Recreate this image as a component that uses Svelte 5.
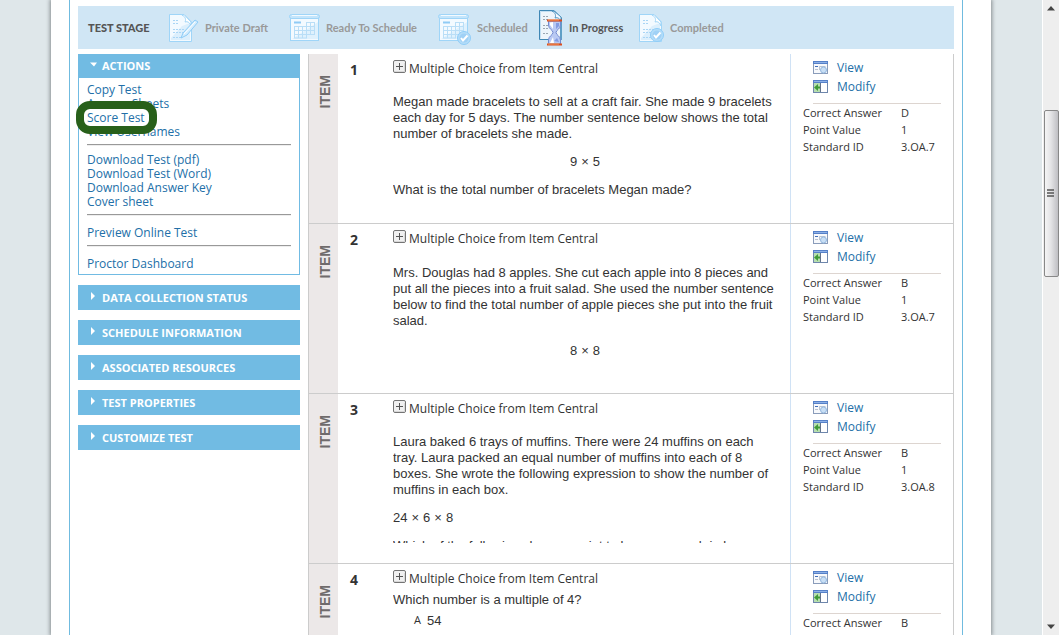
<script>
  const stages = [
    { label: 'Private Draft', icon: 'draft' },
    { label: 'Ready To Schedule', icon: 'calendar' },
    { label: 'Scheduled', icon: 'calendarCheck' },
    { label: 'In Progress', icon: 'progress', active: true },
    { label: 'Completed', icon: 'complete' }
  ];

  const groups = [
    ['Copy Test', 'Answer Sheets', 'Score Test', 'View Usernames'],
    ['Download Test (pdf)', 'Download Test (Word)', 'Download Answer Key', 'Cover sheet'],
    ['Preview Online Test'],
    ['Proctor Dashboard']
  ];

  const panels = [
    'DATA COLLECTION STATUS',
    'SCHEDULE INFORMATION',
    'ASSOCIATED RESOURCES',
    'TEST PROPERTIES',
    'CUSTOMIZE TEST'
  ];

  const items = [
    {
      answer: 'D',
      standard: '3.OA.7',
      blocks: [
        { text: 'Megan made bracelets to sell at a craft fair. She made 9 bracelets each day for 5 days. The number sentence below shows the total number of bracelets she made.' },
        { factors: [9, 5], centered: true },
        { text: 'What is the total number of bracelets Megan made?' }
      ]
    },
    {
      answer: 'B',
      standard: '3.OA.7',
      spacious: true,
      blocks: [
        { text: 'Mrs. Douglas had 8 apples. She cut each apple into 8 pieces and put all the pieces into a fruit salad. She used the number sentence below to find the total number of apple pieces she put into the fruit salad.' },
        { factors: [8, 8], centered: true }
      ]
    },
    {
      answer: 'B',
      standard: '3.OA.8',
      blocks: [
        { text: 'Laura baked 6 trays of muffins. There were 24 muffins on each tray. Laura packed an equal number of muffins into each of 8 boxes. She wrote the following expression to show the number of muffins in each box.' },
        { factors: [24, 6, 8] },
        { text: 'Which of the following shows a point to be a sum each in b' }
      ]
    },
    {
      answer: 'B',
      standard: '3.OA.9',
      compact: true,
      blocks: [{ text: 'Which number is a multiple of 4?' }],
      choice: { letter: 'A', value: '54' }
    }
  ];
</script>

{#snippet paper()}
  <path d="M1.5 1.5H16L23.5 9V28.5H1.5Z" fill="#f3faff" stroke="#9fd5f8" />
  <path d="M3 25L14 13L22 10V27H3Z" fill="#dceffc" />
  <path d="M13 2C19 3 22 7 23 13L23.5 9L16 1.5Z" fill="#c0e2f9" />
  <path d="M14 2C18 4 18 7 17 9C20 8 22 10 23 13V9L16 1.5Z" fill="#fff" stroke="#9fd5f8" />
  <path d="M5 7.5H10M5 10.5H11M5 16.5H17M5 19.5H15M5 24.5H13" stroke="#a9d5f5" stroke-dasharray="2 1" />
{/snippet}

{#snippet calendar()}
  <rect x="1.5" y="5.5" width="28" height="22" fill="#f3faff" stroke="#9fd5f8" />
  <path d="M3 26L29 9V26Z" fill="#dff1fd" />
  <rect x=".5" y="1.5" width="30" height="4" rx="2" fill="#c4e5fb" stroke="#9fd5f8" />
  <path d="M3 2.5H28" stroke="#f3faff" />
  <path d="M5 9.5H12" stroke="#8fcbf5" stroke-width="2" />
  <path d="M17 9.5H26M5 13.5H26M5 17.5H26M5 21.5H26M5 25H18M5.5 13V25M9.5 13V25M13.5 13V25M17.5 9V25M21.5 9V22M25.5 9V22" stroke="#b9def7" fill="none" />
{/snippet}

{#snippet tick(cx, cy)}
  <circle {cx} {cy} r="6.5" fill="#b5ddf9" stroke="#8fcdf8" />
  <circle {cx} {cy} r="4.5" fill="#a0d1f6" />
  <path d="M{cx - 3} {cy}L{cx - 1} {cy + 2.5}L{cx + 3.5} {cy - 2.5}" fill="none" stroke="#fff" stroke-width="2" />
{/snippet}

{#snippet stageIcon(name)}
  {#if name === 'draft'}
    <svg width="30" height="36" viewBox="0 0 30 36" aria-hidden="true">
      <g transform="translate(-1 3)">
        {@render paper()}
        <path d="M13 25L15 20L27 7L30 9L19 22Z" fill="#d5edfd" stroke="#8dccf7" />
        <path d="M16 21L27 9" stroke="#fff" />
      </g>
    </svg>
  {:else if name === 'calendar'}
    <svg width="31" height="36" viewBox="0 0 31 36" aria-hidden="true">
      <g transform="translate(0 3)">{@render calendar()}</g>
    </svg>
  {:else if name === 'calendarCheck'}
    <svg width="33" height="36" viewBox="0 0 33 36" aria-hidden="true">
      <g transform="translate(0 3)">{@render calendar()}{@render tick(26, 25)}</g>
    </svg>
  {:else if name === 'progress'}
    <svg width="24" height="36" viewBox="0 0 24 36" aria-hidden="true">
      <path d="M.5 .5H15L22.5 8V29.5H.5Z" fill="#eef5fb" stroke="#3f87b5" />
      <path d="M1.5 28.5V1.5H13" fill="none" stroke="#c3dff2" />
      <path d="M12 1C18 2 21 6 22 12V8L15 .5Z" fill="#5f9fc6" />
      <path d="M13 1C17 3 17 6 16 8C19 7 21 9 22 11V7L15 1Z" fill="#f5faff" stroke="#4f94c0" />
      <path d="M22 10V29" stroke="#5f9fc6" stroke-width="2" />
      <path d="M4 6.5H9M4 9.5H10M4 15.5H9M4 18.5H10M4 23.5H9" stroke="#9aa7b2" stroke-dasharray="2 1" />
      <path d="M9.5 11H21.5V15C21.5 19 17 20 17 22.5C17 25 21.5 26 21.5 30V34H9.5V30C9.5 26 14 25 14 22.5C14 20 9.5 19 9.5 15Z" fill="#b9c9f3" stroke="#7188cf" />
      <path d="M11 12.5V15L14 19V12ZM11 33L14 27L15 33Z" fill="#fff" />
      <path d="M17 13H20V16L17 19ZM15 31L18 28L20 32Z" fill="#839be2" />
      <path d="M8 10.5H23M8 34.5H23" stroke="#dc4d1d" stroke-width="2" />
      <path d="M9 10H20M9 34H20" stroke="#f59a5f" />
    </svg>
  {:else}
    <svg width="25" height="36" viewBox="0 0 25 36" aria-hidden="true">
      <g transform="translate(-1 3)">{@render paper()}{@render tick(19, 22)}</g>
    </svg>
  {/if}
{/snippet}

<div class="window">
  <div class="backdrop">
    <div class="sheet">
      <div class="content">
        <div class="stagebar">
          <strong>TEST STAGE</strong>
          {#each stages as stage}
            <div class="stage" class:active={stage.active}>
              {@render stageIcon(stage.icon)}
              <span>{stage.label}</span>
            </div>
          {/each}
        </div>

        <div class="columns">
          <nav class="sidebar">
            <section class="actions">
              <button class="panel open"><i class="down"></i>ACTIONS</button>
              <div class="links">
                {#each groups as group, g}
                  {#if g > 0}<hr />{/if}
                  <ul class:single={group.length === 1}>
                    {#each group as link}
                      <li><a href="#top" class:ringed={link === 'Score Test'}>{link}</a></li>
                    {/each}
                  </ul>
                {/each}
              </div>
            </section>
            {#each panels as title}
              <button class="panel"><i class="right"></i>{title}</button>
            {/each}
          </nav>

          <main class="items">
            {#each items as item, n}
              <article>
                <div class="strip"><span>ITEM</span></div>
                <div class="number">{n + 1}</div>
                <div class="question">
                  <div class="kind">
                    <button class="expand" aria-label="Expand">
                      <svg width="13" height="13" viewBox="0 0 13 13" aria-hidden="true">
                        <rect x=".5" y=".5" width="12" height="12" rx="1.5" fill="#f0f0f0" stroke="#747474" />
                        <path d="M2 11.5H11.5V3" fill="none" stroke="#d8d8d8" />
                        <path d="M3 6.5H10M6.5 3V10" stroke="#555" />
                      </svg>
                    </button>
                    <span>Multiple Choice from Item Central</span>
                  </div>
                  <div class="stem" class:compact={item.compact} class:spacious={item.spacious}>
                    {#each item.blocks as block}
                      {#if block.text}
                        <p>{block.text}</p>
                      {:else}
                        <p class:centered={block.centered}>
                          {#each block.factors as f, i}{#if i > 0}<span class="times">×</span>{/if}{f}{/each}
                        </p>
                      {/if}
                    {/each}
                    {#if item.choice}
                      <div class="choice"><small>{item.choice.letter}</small><span>{item.choice.value}</span></div>
                    {/if}
                  </div>
                </div>
                <div class="details">
                  <a class="tool" href="#view">
                    <svg width="15" height="13" viewBox="0 0 15 13" aria-hidden="true">
                      <rect x=".5" y=".5" width="14" height="12" fill="#f7f9fc" stroke="#8a9cba" />
                      <path d="M0 1.5H15" stroke="#5580c8" stroke-width="3" />
                      <path d="M1 1.5H14" stroke="#8db0e6" />
                      <path d="M2 5.5H5" stroke="#446fb5" />
                      <path d="M6.5 5.5H12.5M6.5 5.5V9M2 8.5H5" stroke="#b9c3d2" fill="none" />
                      <circle cx="10.5" cy="9" r="3" fill="#c9dff5" stroke="#94b8df" />
                    </svg>
                    View
                  </a>
                  <a class="tool" href="#modify">
                    <svg width="15" height="13" viewBox="0 0 15 13" aria-hidden="true">
                      <rect x=".5" y=".5" width="14" height="12" fill="#fff" stroke="#6e86ab" />
                      <path d="M0 1.5H15" stroke="#5580c8" stroke-width="3" />
                      <path d="M1 1.5H14" stroke="#8db0e6" />
                      <path d="M1 3H7V12H1Z" fill="#b7deb0" />
                      <path d="M7.5 3V12" stroke="#62738c" />
                      <path d="M1 7.5L5 4V6.5H7V8.5H5V11Z" fill="#3f9b38" />
                    </svg>
                    Modify
                  </a>
                  <dl>
                    <dt>Correct Answer</dt><dd>{item.answer}</dd>
                    <dt>Point Value</dt><dd>1</dd>
                    <dt>Standard ID</dt><dd>{item.standard}</dd>
                  </dl>
                </div>
              </article>
            {/each}
          </main>
        </div>
      </div>
    </div>
  </div>

  <div class="scrollbar" aria-hidden="true">
    <svg class="up" width="8" height="5" viewBox="0 0 8 5"><path d="M0 4.5L4 0L8 4.5Z" fill="#444" /></svg>
    <div class="thumb">
      <svg width="8" height="9" viewBox="0 0 8 9"><path d="M0 1H7M0 4H7M0 7H7" stroke="#555" stroke-width="1.5" /></svg>
    </div>
    <svg class="bottom" width="8" height="5" viewBox="0 0 8 5"><path d="M0 .5L4 5L8 .5Z" fill="#444" /></svg>
  </div>
</div>

<style>
  .window {
    display: grid;
    grid-template-columns: 1fr 17px;
    height: 100vh;
    overflow: hidden;
    font: 12px/14px "Open Sans", sans-serif;
    color: #333;
  }
  .backdrop {
    display: flex;
    padding: 0 51px;
    background: #dfe7ea;
    overflow: hidden;
  }
  .sheet {
    flex: 1;
    padding: 0 28px 0 18px;
    background: #fff;
    box-shadow: 0 0 4px 1px #858b8e;
  }
  .content {
    padding: 6px 8px 0;
    border: solid #70bbdf;
    border-width: 0 1px;
  }
  button {
    border: 0;
    padding: 0;
    font: inherit;
  }
  a {
    color: #226fa8;
    text-decoration: none;
  }

  .stagebar {
    display: grid;
    grid-template-columns: 81px 120px 149px 101px 100px auto;
    align-items: center;
    height: 43px;
    padding-left: 10px;
    background: #d0e6f5;
    font: 700 11px/14px Lato, sans-serif;
    color: #999;
  }
  .stagebar strong,
  .stage.active {
    color: #555;
  }
  .stage {
    display: flex;
    align-items: center;
    gap: 6px;
    white-space: nowrap;
  }
  .stage svg {
    flex: none;
  }

  .columns {
    display: grid;
    grid-template-columns: 222px 1fr;
    gap: 8px;
    margin-top: 5px;
  }
  .sidebar {
    display: flex;
    flex-direction: column;
    gap: 10px;
  }
  .panel {
    display: flex;
    align-items: center;
    width: 100%;
    height: 25px;
    padding-left: 12px;
    background: #71bbe3;
    color: #fff;
    font-size: 11px;
    font-weight: 700;
  }
  .panel.open {
    height: 24px;
  }
  .panel i {
    width: 12px;
    height: 8px;
    margin-bottom: 3px;
    background: #fff;
  }
  .panel .right {
    clip-path: polygon(1px 0, 5px 4px, 1px 8px);
  }
  .panel .down {
    clip-path: polygon(0 2px, 7px 2px, 4px 6px);
  }
  .links {
    padding: 5px 8px 3px;
    border: 1px solid #71bbe3;
    border-top: 0;
  }
  .links ul {
    margin: 0;
    padding: 0;
    list-style: none;
  }
  .links hr {
    height: 1px;
    margin: 5px 0 7px;
    border: 0;
    border-top: 1px solid #999;
    background: #eee;
  }
  .links .single {
    padding-top: 3px;
  }
  .ringed {
    position: relative;
  }
  .ringed::after {
    content: "";
    position: absolute;
    inset: -8px -12px -8px -11px;
    border: 8px solid #28601a;
    border-radius: 14px;
  }

  .items {
    border: solid #ccc;
    border-width: 0 1px;
  }
  article {
    display: grid;
    grid-template-columns: 29px 55px 1fr 163px;
    border-bottom: 1px solid #ccc;
  }
  .strip {
    padding: 21px 7px;
    background: #ece8e8;
  }
  .strip span {
    writing-mode: vertical-rl;
    transform: rotate(180deg);
    font: 700 14px/18px "Liberation Sans", sans-serif;
    color: #6f6b6b;
  }
  .number {
    padding: 7px 12px;
    font-size: 14px;
    line-height: 18px;
    font-weight: 700;
  }
  .question {
    height: 149px;
    margin-bottom: 20px;
    overflow: hidden;
  }
  .kind {
    display: flex;
    gap: 3px;
    padding-top: 6px;
    line-height: 18px;
  }
  .expand {
    height: 13px;
    background: none;
  }
  .expand svg {
    display: block;
  }
  .stem {
    padding-right: 13px;
    font: 13px/16px "Liberation Sans", sans-serif;
  }
  .stem p {
    margin: 12px 0;
  }
  .stem p:first-child {
    margin-top: 16px;
  }
  .stem.spacious p {
    margin-bottom: 14px;
  }
  .stem.spacious p:first-child {
    margin-top: 17px;
  }
  .stem.compact p:first-child {
    margin: 4px 0 5px;
  }
  .centered {
    text-align: center;
  }
  .times {
    padding: 0 4px;
  }
  .choice {
    display: flex;
    gap: 6px;
    padding-left: 21px;
  }
  .choice small {
    font: 11px/14px "Open Sans", sans-serif;
  }
  .details {
    padding: 4px 12px;
    border-left: 1px solid #d0e2f5;
  }
  .tool {
    display: flex;
    align-items: center;
    gap: 9px;
    height: 19px;
    padding-left: 10px;
  }
  dl {
    display: grid;
    grid-template-columns: 98px 1fr;
    margin: 7px 0 0;
    padding-top: 1px;
    line-height: 17px;
    font-size: 11px;
    background: linear-gradient(#ddd5d0, #ddd5d0) 10px 0 / 128px 1px no-repeat;
  }
  dd {
    margin: 0;
  }

  .scrollbar {
    display: grid;
    grid-template-rows: 110fr 167fr 358fr;
    justify-items: center;
    border-left: 1px solid #fff;
    background: #eee;
  }
  .up {
    margin-top: 6px;
  }
  .bottom {
    align-self: end;
    margin-bottom: 6px;
  }
  .thumb {
    display: grid;
    place-items: center;
    width: 13px;
    border: 1px solid #888;
    border-radius: 2px;
    background: linear-gradient(90deg, #f5f5f5, #e4e4e6 45%, #bfbfc3);
  }
</style>
